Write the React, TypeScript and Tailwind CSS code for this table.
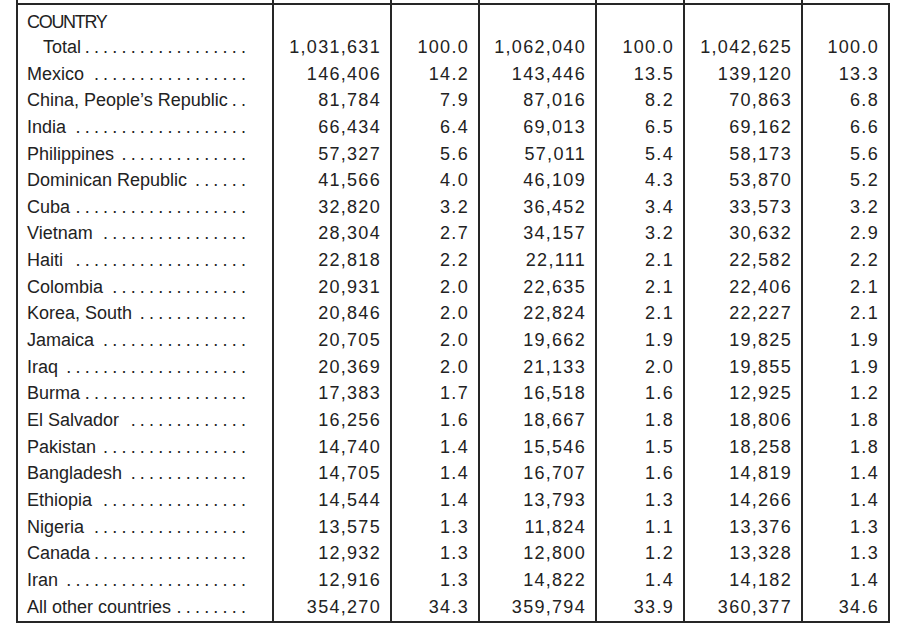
import { useLayoutEffect, useRef, useState } from "react";

// name, then three years of number / percent
const rows: string[][] = [
  ["Total", "1,031,631", "100.0", "1,062,040", "100.0", "1,042,625", "100.0"],
  ["Mexico", "146,406", "14.2", "143,446", "13.5", "139,120", "13.3"],
  ["China, People’s Republic", "81,784", "7.9", "87,016", "8.2", "70,863", "6.8"],
  ["India", "66,434", "6.4", "69,013", "6.5", "69,162", "6.6"],
  ["Philippines", "57,327", "5.6", "57,011", "5.4", "58,173", "5.6"],
  ["Dominican Republic", "41,566", "4.0", "46,109", "4.3", "53,870", "5.2"],
  ["Cuba", "32,820", "3.2", "36,452", "3.4", "33,573", "3.2"],
  ["Vietnam", "28,304", "2.7", "34,157", "3.2", "30,632", "2.9"],
  ["Haiti", "22,818", "2.2", "22,111", "2.1", "22,582", "2.2"],
  ["Colombia", "20,931", "2.0", "22,635", "2.1", "22,406", "2.1"],
  ["Korea, South", "20,846", "2.0", "22,824", "2.1", "22,227", "2.1"],
  ["Jamaica", "20,705", "2.0", "19,662", "1.9", "19,825", "1.9"],
  ["Iraq", "20,369", "2.0", "21,133", "2.0", "19,855", "1.9"],
  ["Burma", "17,383", "1.7", "16,518", "1.6", "12,925", "1.2"],
  ["El Salvador", "16,256", "1.6", "18,667", "1.8", "18,806", "1.8"],
  ["Pakistan", "14,740", "1.4", "15,546", "1.5", "18,258", "1.8"],
  ["Bangladesh", "14,705", "1.4", "16,707", "1.6", "14,819", "1.4"],
  ["Ethiopia", "14,544", "1.4", "13,793", "1.3", "14,266", "1.4"],
  ["Nigeria", "13,575", "1.3", "11,824", "1.1", "13,376", "1.3"],
  ["Canada", "12,932", "1.3", "12,800", "1.2", "13,328", "1.3"],
  ["Iran", "12,916", "1.3", "14,822", "1.4", "14,182", "1.4"],
  ["All other countries", "354,270", "34.3", "359,794", "33.9", "360,377", "34.6"],
];

const cols = "grid grid-cols-[256px_118px_88px_117px_88px_118px_87px]";
const cell = "border-l-2 border-[#262626]";
const DOT = 9.2;

function NameCell({ name, indent }: { name: string; indent?: boolean }) {
  const ref = useRef<HTMLSpanElement>(null);
  const [count, setCount] = useState(0);

  useLayoutEffect(() => {
    const measure = () => {
      if (!ref.current) return;
      const w = ref.current.getBoundingClientRect().width;
      setCount(Math.max(0, Math.floor((w - 1) / DOT)));
    };
    measure();
    document.fonts?.ready.then(measure);
  }, []);

  return (
    <div className={`${cell} flex items-center pl-[9px] pr-[24px]`}>
      <span className={`whitespace-nowrap ${indent ? "pl-[16px]" : ""}`}>{name}</span>
      <span ref={ref} className="flex-1 min-w-0 flex justify-end whitespace-nowrap">
        {Array.from({ length: count }).map((_, i) => (
          <span key={i} className="inline-block shrink-0 w-[9.2px] text-center">
            .
          </span>
        ))}
      </span>
    </div>
  );
}

export default function App() {
  return (
    <div
      className="min-h-screen bg-white pl-[16px] text-[18px] text-[#222]"
      style={{ fontFamily: '"Liberation Sans", Arial, sans-serif' }}
    >
      <div className={`${cols} h-[3px]`}>
        {Array.from({ length: 7 }).map((_, i) => (
          <div key={i} className={cell} />
        ))}
      </div>
      <div className="w-[874px] border-t-2 border-b-2 border-r-2 border-[#262626]">
        <div className={`${cols} h-[28.9px]`}>
          <div className={`${cell} pl-[9px] pt-[4.7px] leading-[24px] tracking-[-1.3px]`}>COUNTRY</div>
          {Array.from({ length: 6 }).map((_, i) => (
            <div key={i} className={cell} />
          ))}
        </div>
        {rows.map((r, i) => (
          <div
            key={r[0]}
            className={`${cols} ${i === rows.length - 1 ? "h-[27.7px]" : "h-[26.66px]"} leading-[26.66px]`}
          >
            <NameCell name={r[0]} indent={i === 0} />
            {r.slice(1).map((v, j) => (
              <div key={j} className={`${cell} text-right pr-[9px] tracking-[1.3px] whitespace-nowrap`}>
                {v}
              </div>
            ))}
          </div>
        ))}
      </div>
    </div>
  );
}
